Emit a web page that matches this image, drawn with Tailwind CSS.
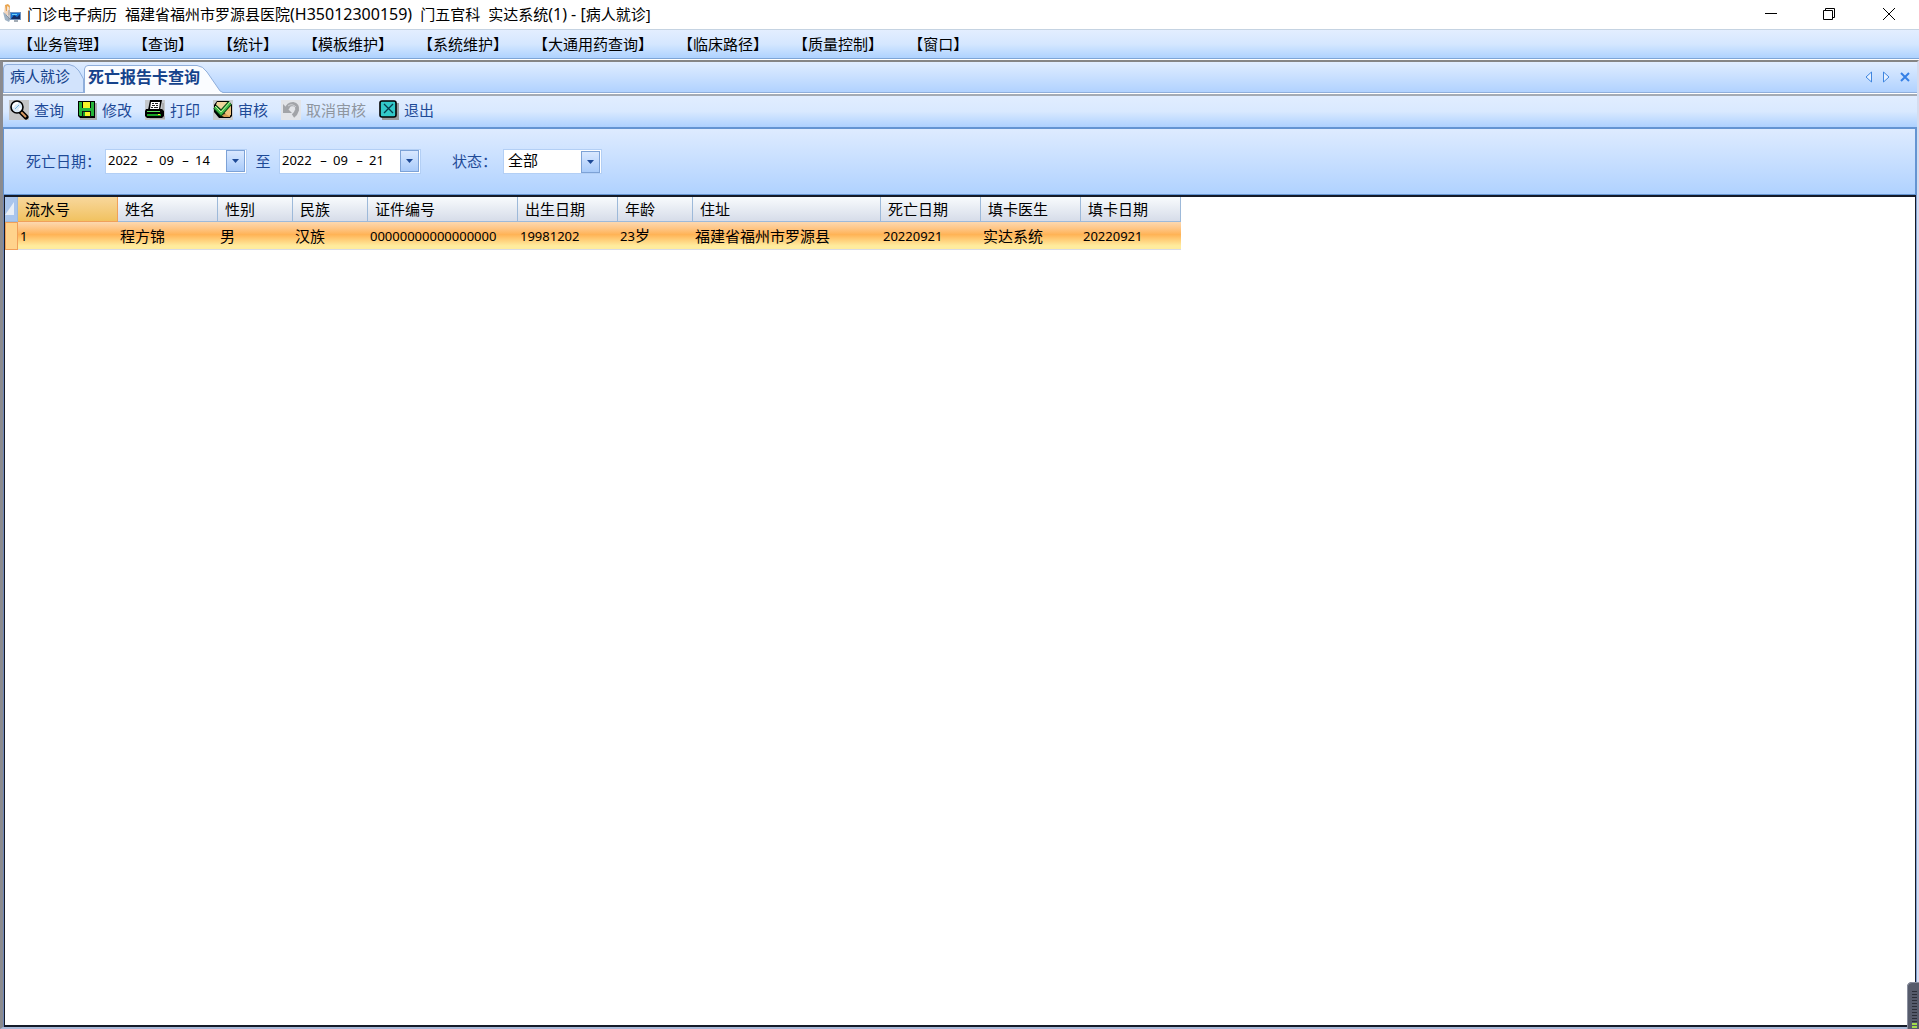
<!DOCTYPE html>
<html lang="zh-CN">
<head>
  <meta charset="UTF-8" />
  <meta name="viewport" content="width=device-width, initial-scale=1" />
  <title>门诊电子病历</title>
  <script src="https://cdn.jsdelivr.net/npm/@tailwindcss/browser@4"></script>
</head>
<body class="h-screen flex flex-col overflow-hidden bg-white font-['Noto_Sans','Noto_Sans_CJK_SC',sans-serif] text-[15px] leading-5 text-black">
  <!-- Title bar -->
  <header class="h-[29px] shrink-0 flex items-center justify-between pl-[2px] pb-[2px]">
    <div class="flex items-center gap-[6px]">
      <svg class="w-[19px] h-[19px]" viewBox="0 0 19 19" aria-hidden="true">
        <path d="M3 1h4l1 4v6l-4 1-2-3z" fill="#f3d6bd" />
        <path d="M3 1l3-1 2 2-1 5H4z" fill="#e9a44d" />
        <path d="M5 2l2 1v4H5z" fill="#f6e3cf" />
        <path d="M1 8l3 2 4 6-1 2-4-2z" fill="#9fb2c4" />
        <path d="M7 6v10M4 11l5 5" stroke="#8b93a0" fill="none" />
        <path d="M8 8h11v8H8z" fill="#6f93bf" />
        <path d="M9 9h9v6H9z" fill="#1573d4" />
        <path d="M9 15l3-4 3 2 3-3v5z" fill="#152c63" />
        <path d="M10 10h5v1h-5z" fill="#6ed2f7" />
        <path d="M12 16h4v2h-4z" fill="#a3acb5" />
      </svg>
      <h1 class="flex gap-2 whitespace-pre"><span>门诊电子病历</span><span>福建省福州市罗源县医院<span class="text-base leading-5">(H35012300159)</span></span><span>门五官科</span><span>实达系统<span class="text-base leading-5">(1) - [</span>病人就诊]</span></h1>
    </div>
    <div class="flex h-full">
      <button aria-label="最小化" class="w-[58px] flex items-center justify-center"><svg class="w-3 h-3" viewBox="0 0 12 12"><path d="M0 5.500h12" stroke="#000" /></svg></button>
      <button aria-label="还原" class="w-[58px] flex items-center justify-center"><svg class="w-3 h-3" viewBox="0 0 12 12" fill="none" stroke="#000"><path d="M.5 2.500h9v9h-9zM2.500 2.500v-2h9v9h-2" /></svg></button>
      <button aria-label="关闭" class="w-[61px] flex items-center justify-center"><svg class="w-3 h-3" viewBox="0 0 12 12"><path d="M0 0l12 12M12 0L0 12" stroke="#000" /></svg></button>
    </div>
  </header>

  <!-- Menu bar -->
  <nav class="h-[30px] shrink-0 flex items-center gap-[25px] pl-[18px] border-t border-t-[#c5d3e2] border-b border-b-[#7ea5d6] bg-linear-to-b from-[#e3eeff] via-[#d5e7ff] to-[#aed2ff] whitespace-nowrap">
    <button>【业务管理】</button>
    <button>【查询】</button>
    <button>【统计】</button>
    <button>【模板维护】</button>
    <button>【系统维护】</button>
    <button>【大通用药查询】</button>
    <button>【临床路径】</button>
    <button>【质量控制】</button>
    <button>【窗口】</button>
  </nav>

  <div class="flex-1 min-h-0 mt-px flex flex-col border-t-2 border-t-[#858585] border-l-[3px] border-l-[#8b8b8f] border-r-2 border-r-[#d5dcee] border-b-2 border-b-[#a9b9d8]">
    <!-- Tabs -->
    <div class="h-[31px] shrink-0 flex items-end justify-between border-b border-[#8faedb] bg-linear-to-b from-[#e0edff] to-[#b1d2ff] text-[#15428b]">
      <div class="flex items-end" role="tablist">
        <button role="tab" class="relative w-[81px] h-[28px]">
          <svg class="absolute left-0 top-0 w-[81px] h-[28px]" viewBox="0 0 81 28" aria-hidden="true"><path d="M.5 28V4Q1 .5 4 .5H66Q72 1 76 7L80.500 15V28" fill="#d2e3fc" stroke="#8faedb" /></svg>
          <span class="relative block pl-[7px] pb-[5px] text-left">病人就诊</span>
        </button>
        <button role="tab" aria-selected="true" class="relative w-[139px] h-[28px] -mb-px">
          <svg class="absolute left-0 top-0 w-[139px] h-[28px]" viewBox="0 0 139 28" aria-hidden="true"><path d="M.5 28V4Q1 .5 4 .5H113Q119 1 123 7L134 23Q136 27 139 27.500V28" fill="#fafcff" stroke="#8faedb" /></svg>
          <span class="relative block pl-1 pb-[5px] text-left text-base leading-5 font-bold">死亡报告卡查询</span>
        </button>
      </div>
      <div class="h-full flex items-center gap-[8px] pr-[6px]">
        <button aria-label="上一个"><svg class="w-[9px] h-3" viewBox="0 0 9 12"><path d="M6.500 1v10L1 6z" fill="#e5f0ff" stroke="#3f86e0" /></svg></button>
        <button aria-label="下一个"><svg class="w-[9px] h-3" viewBox="0 0 9 12"><path d="M1.500 1v10L7 6z" fill="#e5f0ff" stroke="#3f86e0" /></svg></button>
        <button aria-label="关闭标签"><svg class="w-3 h-3" viewBox="0 0 12 12"><path d="M2 2l8 8M10 2l-8 8" stroke="#3580e6" stroke-width="2" /></svg></button>
      </div>
    </div>

    <!-- Toolbar -->
    <div class="h-[35px] shrink-0 mt-px flex items-center gap-[13px] pl-[6px] pb-[3px] border-t-2 border-t-[#a4abb5] border-b-2 border-b-[#6494d2] bg-linear-to-b from-[#e1edff] via-[#d9e9ff] to-[#aed1ff] text-[#1e4a97] whitespace-nowrap">
      <button class="flex items-center gap-[5px]">
        <svg class="w-5 h-5" viewBox="0 0 20 20" aria-hidden="true">
          <path d="M0 0h20v20H0z" fill="#c4c5c6" />
          <path d="M11 11l6 6" stroke="#000" stroke-width="5" stroke-linecap="round" />
          <path d="M12 12l5 5" stroke="#d89a62" stroke-width="2" />
          <circle cx="8" cy="7" r="6" fill="#dcebf8" stroke="#000" stroke-width="1.600" />
          <path d="M4 7q1-4 5-4M10 10l2-2" stroke="#fff" stroke-width="2" fill="none" />
          <path d="M6 9l4-4" stroke="#75b6df" />
        </svg>
        查询
      </button>
      <button class="flex items-center gap-[5px]">
        <svg class="w-5 h-5" viewBox="0 0 20 20" aria-hidden="true">
          <path d="M3 3h17v17H3z" fill="#aaacae" />
          <path d="M1 1h17v17H3l-2-2z" fill="#000" />
          <path d="M2 2h3v14H3l-1-1zM14 2h3v14h-3zM5 8h9v3H5z" fill="#25b53a" />
          <path d="M6 2h7v6H6z" fill="#f7f429" />
          <path d="M5 11h9v6H5z" fill="#111" />
          <path d="M6 12h7v4H6z" fill="#f7f429" />
          <path d="M6 12h2v4H6z" fill="#169b2c" />
        </svg>
        修改
      </button>
      <button class="flex items-center gap-[5px]">
        <svg class="w-5 h-5" viewBox="0 0 20 20" aria-hidden="true">
          <path d="M0 0h20v20H0z" fill="#c4c8cc" />
          <path d="M3 16h17v3H5zM17 3h2v7h-2z" fill="#aaacae" />
          <path d="M5 0h12l-2 10H3z" fill="#000" />
          <path d="M6 2h9l-1 7H5z" fill="#fff" />
          <path d="M7 3.500h2m1 0h3M7 5.500h3m1 0h2M6 7.500h2m1 0h4" stroke="#222" />
          <path d="M1 9h16l2 2v5l-2 2H2l-2-2v-5z" fill="#000" />
          <path d="M2 11h13v1H2z" fill="#5de35d" />
          <path d="M2 14h14v2H2z" fill="#16a026" />
          <path d="M13 14h2v1h-2z" fill="#f7f429" />
        </svg>
        打印
      </button>
      <button class="flex items-center gap-[5px]">
        <svg class="w-5 h-5" viewBox="0 0 20 20" aria-hidden="true">
          <path d="M0 0h20v20H0z" fill="#c9cdd0" />
          <path d="M4 1h12l3 4v11l-2 2H6l-5-6V5z" fill="#000" />
          <path d="M4 2h11l-5 9-7-6z" fill="#f0d59c" />
          <path d="M7 15l4 2h6v-4z" fill="#d59b51" />
          <path d="M11 13l6-8h1v10l-2 1z" fill="#efc27c" />
          <path d="M2 7l6 6L17 3" fill="none" stroke="#0b4b18" stroke-width="5" />
          <path d="M2 7l6 6L17 3" fill="none" stroke="#43bd4a" stroke-width="3" />
          <path d="M2 6l6 6L17 2" fill="none" stroke="#c5f0a0" />
        </svg>
        审核
      </button>
      <button disabled class="flex items-center gap-[5px] text-[#8f969f]">
        <svg class="w-5 h-5" viewBox="0 0 20 20" aria-hidden="true">
          <path d="M0 0h20v20H0z" fill="#e2e4e8" />
          <path d="M6 9q1-5 6-5 5 1 4 6-1 4-4 6" fill="none" stroke="#a2a4a8" stroke-width="4" />
          <path d="M2 4v9h9z" fill="#a2a4a8" />
          <path d="M7 6q4-3 8 1" fill="none" stroke="#d0d2d5" />
        </svg>
        取消审核
      </button>
      <button class="flex items-center gap-[5px]">
        <svg class="w-5 h-5" viewBox="0 0 20 20" aria-hidden="true">
          <path d="M3 3h17v17H3z" fill="#989a9c" />
          <rect x="1" y="1" width="16" height="16" rx="2" fill="#33c9c9" stroke="#000" stroke-width="1.600" />
          <path d="M5 4l9 9M14 4l-9 9" stroke="#063c4c" stroke-width="1.300" />
        </svg>
        退出
      </button>
    </div>

    <!-- Filters -->
    <form class="h-[66px] shrink-0 flex items-center pl-[22px] pb-px border-l border-r-2 border-b border-[#6494d2] bg-linear-to-b from-[#deebff] to-[#b0d2ff] text-[#1e4a97]">
      <label for="from-year" class="w-[79px]">死亡日期：</label>
      <div class="w-[142px] h-[25px] flex items-center justify-between border border-[#b3cff5] bg-white pl-[2px] pr-px">
        <div class="flex pb-[3px] text-[13px] text-black">
          <input id="from-year" type="text" value="2022" class="w-8 outline-none" />
          <span class="w-[19px] text-center">–</span>
          <input type="text" aria-label="月" value="09" class="w-[17px] outline-none" />
          <span class="w-[19px] text-center">–</span>
          <input type="text" aria-label="日" value="14" class="w-[17px] outline-none" />
        </div>
        <button type="button" aria-label="选择日期" class="w-[19px] h-[22px] flex items-center justify-center border border-[#7da2d6] bg-linear-to-b from-[#d9e8ff] to-[#a9cbfa]"><svg class="w-[7px] h-1" viewBox="0 0 7 4"><path d="M0 0h7L3.500 4z" fill="#1e4a97" /></svg></button>
      </div>
      <label for="to-year" class="w-8 text-center">至</label>
      <div class="w-[142px] h-[25px] flex items-center justify-between border border-[#b3cff5] bg-white pl-[2px] pr-px">
        <div class="flex pb-[3px] text-[13px] text-black">
          <input id="to-year" type="text" value="2022" class="w-8 outline-none" />
          <span class="w-[19px] text-center">–</span>
          <input type="text" aria-label="月" value="09" class="w-[17px] outline-none" />
          <span class="w-[19px] text-center">–</span>
          <input type="text" aria-label="日" value="21" class="w-[17px] outline-none" />
        </div>
        <button type="button" aria-label="选择日期" class="w-[19px] h-[22px] flex items-center justify-center border border-[#7da2d6] bg-linear-to-b from-[#d9e8ff] to-[#a9cbfa]"><svg class="w-[7px] h-1" viewBox="0 0 7 4"><path d="M0 0h7L3.500 4z" fill="#1e4a97" /></svg></button>
      </div>
      <label for="status" class="w-[51px] ml-[31px]">状态：</label>
      <div class="relative w-[99px] h-[25px] border border-[#b3cff5] bg-white">
        <select id="status" class="w-full h-full appearance-none pl-1 pb-[3px] text-black outline-none">
          <option>全部</option>
        </select>
        <span class="pointer-events-none absolute right-px top-px w-[19px] h-[22px] flex items-center justify-center border border-[#7da2d6] bg-linear-to-b from-[#d9e8ff] to-[#a9cbfa]"><svg class="w-[7px] h-1" viewBox="0 0 7 4"><path d="M0 0h7L3.500 4z" fill="#1e4a97" /></svg></span>
      </div>
    </form>

    <!-- Grid -->
    <main class="flex-1 min-h-0 overflow-hidden border-l border-l-[#6f86b5] border-r border-r-[#7f9fd0]">
      <div class="h-full border-l border-r border-y-2 border-[#151b28] bg-white">
        <table class="table-fixed w-[1176px] border-separate border-spacing-0 text-left whitespace-nowrap">
          <colgroup>
            <col class="w-[13px]" />
            <col class="w-[100px]" />
            <col class="w-[100px]" />
            <col class="w-[75px]" />
            <col class="w-[75px]" />
            <col class="w-[150px]" />
            <col class="w-[100px]" />
            <col class="w-[75px]" />
            <col class="w-[188px]" />
            <col class="w-[100px]" />
            <col class="w-[100px]" />
            <col class="w-[100px]" />
          </colgroup>
          <thead>
            <tr class="h-[25px] bg-linear-to-b from-[#f8fbfd] to-[#d5dbe8] *:p-0 *:pl-[7px] *:font-normal *:border-r *:border-b *:border-[#9db9d9]">
              <th class="bg-[#a9c5ed]"><svg class="w-[9px] h-4 -ml-[7px]" viewBox="0 0 9 16" aria-hidden="true"><path d="M0 14L9 1v13z" fill="#e8eef7" /></svg></th>
              <th class="border-[#f0a05a]! bg-linear-to-b from-[#f8d79b] to-[#f1c25f]">流水号</th>
              <th>姓名</th>
              <th>性别</th>
              <th>民族</th>
              <th>证件编号</th>
              <th>出生日期</th>
              <th>年龄</th>
              <th>住址</th>
              <th>死亡日期</th>
              <th>填卡医生</th>
              <th>填卡日期</th>
            </tr>
          </thead>
          <tbody>
            <tr class="h-[28px] bg-linear-to-b from-[#fcd8b0] via-[#ffb355] via-45% to-[#ffec9e] to-85% *:p-0 *:pl-[2px] *:border-b *:border-[#d8dbe5]">
              <td class="border border-[#f0a05a]! bg-[#ffd38c]"></td>
              <td class="text-[13px]">1</td>
              <td>程方锦</td>
              <td>男</td>
              <td>汉族</td>
              <td class="text-[13px]">00000000000000000</td>
              <td class="text-[13px]">19981202</td>
              <td><span class="text-[13px]">23</span>岁</td>
              <td>福建省福州市罗源县</td>
              <td class="text-[13px]">20220921</td>
              <td>实达系统</td>
              <td class="text-[13px]">20220921</td>
            </tr>
          </tbody>
        </table>
      </div>
    </main>
  </div>

  <!-- Docked gauge on the screen edge -->
  <div class="absolute right-0 bottom-0 w-3 h-[47px]">
    <svg class="w-3 h-[47px]" viewBox="0 0 12 47" aria-hidden="true">
      <path d="M0 47V4Q1 0 5 0H12V47z" fill="#565b6b" />
      <path d="M.5 47V4Q1 .5 5 .5H12" fill="none" stroke="#8b90a0" />
      <path d="M5 9.500h5M5 12.500h5M5 15.500h5M5 18.500h5M5 21.500h5M5 24.500h5M5 27.500h5M5 30.500h5M5 33.500h5M5 36.500h5M5 39.500h5" stroke="#2b2e38" />
      <path d="M5 42h5M5 45h5" stroke="#a4dc4a" stroke-width="2" />
    </svg>
  </div>
</body>
</html>
